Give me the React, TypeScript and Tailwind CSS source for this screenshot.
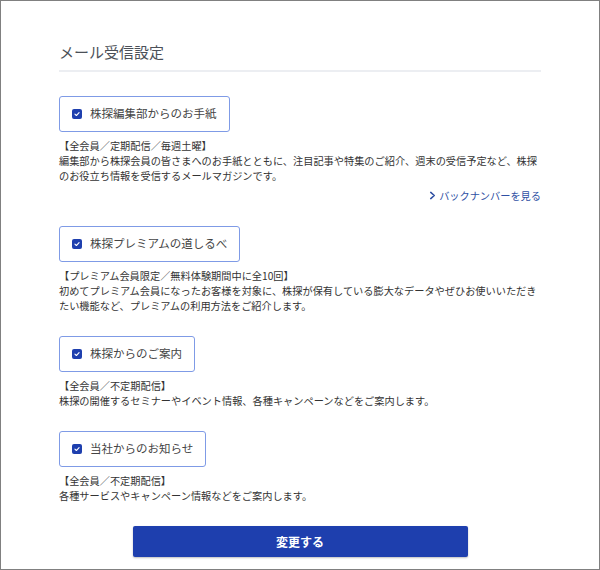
import React from 'react'

interface MailItem {
  id: string;
  label: string;
  meta: string;
  desc: string;
  backNumber?: boolean;
}

const items: MailItem[] = [
  {
    id: 'letter',
    label: '株探編集部からのお手紙',
    meta: '【全会員／定期配信／毎週土曜】',
    desc: '編集部から株探会員の皆さまへのお手紙とともに、注目記事や特集のご紹介、週末の受信予定など、株探のお役立ち情報を受信するメールマガジンです。',
    backNumber: true,
  },
  {
    id: 'premium',
    label: '株探プレミアムの道しるべ',
    meta: '【プレミアム会員限定／無料体験期間中に全10回】',
    desc: '初めてプレミアム会員になったお客様を対象に、株探が保有している膨大なデータやぜひお使いいただきたい機能など、プレミアムの利用方法をご紹介します。',
  },
  {
    id: 'info',
    label: '株探からのご案内',
    meta: '【全会員／不定期配信】',
    desc: '株探の開催するセミナーやイベント情報、各種キャンペーンなどをご案内します。',
  },
  {
    id: 'company',
    label: '当社からのお知らせ',
    meta: '【全会員／不定期配信】',
    desc: '各種サービスやキャンペーン情報などをご案内します。',
  },
]

const CheckMark = () => (
  <span className="flex h-[10px] w-[10px] items-center justify-center rounded-[2px] bg-[#1e3fae]">
    <svg viewBox="0 0 10 10" className="h-[8px] w-[8px]" fill="none">
      <path d="M2.4 5.2 L4.2 6.9 L7.6 3.3" stroke="white" strokeWidth="1.4" strokeLinecap="round" strokeLinejoin="round" />
    </svg>
  </span>
)

export default function App() {
  return (
    <div
      className="h-[570px] w-[600px] overflow-hidden border border-[#808080] bg-white px-[58px] pt-[40px]"
      style={{ fontFamily: '"Noto Sans CJK JP", "Noto Sans", sans-serif' }}
    >
      <div className="border-b-2 border-[#eceef2] pb-[7px]">
        <h1 className="text-[15px] leading-[22px] font-normal text-[#4b5058]">メール受信設定</h1>
      </div>

      <div className="mt-[24px] flex flex-col gap-[23px]">
        {items.map((item) => (
          <section key={item.id}>
            <label className="inline-flex h-[36px] items-center gap-[8px] rounded-[3px] border border-[#7f9be6] px-[12px]">
              <CheckMark />
              <span className="text-[11.5px] leading-none text-[#444]">{item.label}</span>
            </label>
            <div className="mt-[6px] text-[10.2px] leading-[15px] text-[#333]">
              <p>{item.meta}</p>
              <p>{item.desc}</p>
            </div>
            {item.backNumber && (
              <div className="mt-[5px] flex justify-end">
                <a className="flex items-center gap-[3px] text-[10.2px] leading-[15px] text-[#2f4fa3]">
                  <svg viewBox="0 0 8 10" className="h-[9px] w-[7px]" fill="none">
                    <path d="M2 1.5 L6 5 L2 8.5" stroke="currentColor" strokeWidth="1.8" strokeLinecap="round" strokeLinejoin="round" />
                  </svg>
                  バックナンバーを見る
                </a>
              </div>
            )}
          </section>
        ))}
      </div>

      <div className="mt-[23px] flex justify-center">
        <button className="h-[31px] w-[335px] rounded-[2px] bg-[#1e3fae] text-[12px] font-bold text-white shadow-[0_1px_2px_rgba(0,0,0,0.25)]">
          変更する
        </button>
      </div>
    </div>
  )
}
